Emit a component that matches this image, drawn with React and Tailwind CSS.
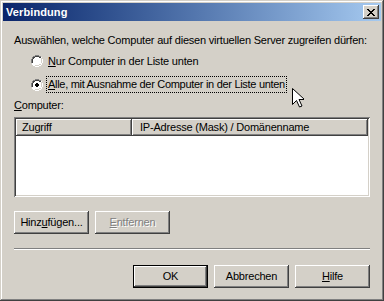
const font = { fontFamily: '"Liberation Sans", Arial, sans-serif' }

function Radio({ checked }) {
  return (
    <svg width="12" height="12" viewBox="0 0 12 12" className="shrink-0">
      <path d="M4 0h4v1h2v1h1v2h1v4h-1v2h-1v1h-2v1H4v-1H2v-1H1V8H0V4h1V2h1V1h2z" fill="#ffffff" />
      <path d="M4 0h4v1h2v1H8V1H4v1H2v2H1v4H0V4h1V2h1V1h2z" fill="#808080" />
      <path d="M4 1h4v1h2v1H8V2H4v1H3v1H2v4H1V4h1V2h2z" fill="#404040" />
      <path d="M10 3h1v5h-1v2H8v1H4v-1h4V9h2z" fill="#d4d0c8" />
      {checked && <path d="M5 4h2v1h1v2H7v1H5V7H4V5h1z" fill="#000" />}
    </svg>
  )
}

function Button({ children, disabled, isDefault }) {
  return (
    <div
      className={
        "w-[75px] h-[23px] flex items-center justify-center text-[11px] bg-[#d4d0c8] " +
        (isDefault
          ? "border border-black shadow-[inset_-1px_-1px_#404040,inset_1px_1px_#ffffff,inset_-2px_-2px_#808080]"
          : "shadow-[inset_-1px_-1px_#404040,inset_1px_1px_#ffffff,inset_-2px_-2px_#808080,inset_2px_2px_#d4d0c8]") +
        (disabled ? " text-[#808080] [text-shadow:1px_1px_#ffffff]" : " text-black")
      }
    >
      {children}
    </div>
  )
}

export default function App() {
  return (
    <div
      style={font}
      className="relative w-[384px] h-[301px] p-[3px] bg-[#d4d0c8] flex flex-col shadow-[inset_-1px_-1px_#404040,inset_1px_1px_#d4d0c8,inset_-2px_-2px_#808080,inset_2px_2px_#ffffff] text-[11px] leading-[13px] tracking-[-0.2px] text-black"
    >
      <div className="h-[18px] flex items-center justify-between pl-[3px] pr-[2px] bg-gradient-to-r from-[#0a246a] to-[#a6caf0]">
        <span className="text-white font-bold text-[11px] tracking-[0.1px]">Verbindung</span>
        <div className="w-[16px] h-[14px] bg-[#d4d0c8] flex items-center justify-center shadow-[inset_-1px_-1px_#404040,inset_1px_1px_#ffffff,inset_-2px_-2px_#808080,inset_2px_2px_#d4d0c8]">
          <svg width="8" height="7" viewBox="0 0 8 7">
            <path d="M0 0h2v1h1v1h2V1h1V0h2v1H7v1H6v1H5v1h1v1h1v1h1v1H6V6H5V5H3v1H2v1H0V6h1V5h1V4h1V3H2V2H1V1H0z" fill="#000" />
          </svg>
        </div>
      </div>

      <div className="flex flex-col px-[11px]">
        <div className="mt-[13px] h-[13px] whitespace-nowrap">
          Auswählen, welche Computer auf diesen virtuellen Server zugreifen dürfen:
        </div>

        <div className="mt-[6px] h-[16px] flex items-center pl-[17px]">
          <Radio />
          <span className="ml-[3px] px-[1px] border border-transparent">
            <u>N</u>ur Computer in der Liste unten
          </span>
        </div>

        <div className="mt-[7px] h-[17px] flex items-center pl-[17px]">
          <Radio checked />
          <span className="ml-[3px] px-[1px] border border-dotted border-black leading-[15px] tracking-[-0.3px]">
            <u>A</u>lle, mit Ausnahme der Computer in der Liste unten
          </span>
        </div>

        <div className="mt-[6px] h-[13px]">
          <u>C</u>omputer:
        </div>

        <div className="mt-[5px] h-[80px] bg-white p-[2px] shadow-[inset_1px_1px_#808080,inset_-1px_-1px_#ffffff,inset_2px_2px_#404040,inset_-2px_-2px_#d4d0c8]">
          <div className="flex h-[17px]">
            <div className="w-[116px] flex items-center pl-[6px] bg-[#d4d0c8] shadow-[inset_-1px_-1px_#404040,inset_1px_1px_#ffffff,inset_-2px_-2px_#808080]">
              Zugriff
            </div>
            <div className="flex-1 flex items-center pl-[8px] bg-[#d4d0c8] shadow-[inset_-1px_-1px_#404040,inset_1px_1px_#ffffff,inset_-2px_-2px_#808080]">
              IP-Adresse (Mask) / Domänenname
            </div>
          </div>
        </div>

        <div className="mt-[14px] flex gap-[6px]">
          <Button>
            Hinz<u>u</u>fügen...
          </Button>
          <Button disabled>
            <u>E</u>ntfernen
          </Button>
        </div>

        <div className="mt-[14px] h-[2px] border-t border-t-[#808080] border-b border-b-white" />

        <div className="mt-[15px] flex justify-end gap-[6px]">
          <Button isDefault>OK</Button>
          <Button>Abbrechen</Button>
          <Button>
            <u>H</u>ilfe
          </Button>
        </div>
      </div>

      <svg
        className="absolute left-[292px] top-[88px]"
        width="12"
        height="20"
        viewBox="0 0 12 20"
      >
        <path
          d="M0.5 0.5v16l4-4 3 6.5 2.5-1-3-6.5h5.5z"
          fill="#ffffff"
          stroke="#000"
          strokeWidth="1"
        />
      </svg>
    </div>
  )
}
